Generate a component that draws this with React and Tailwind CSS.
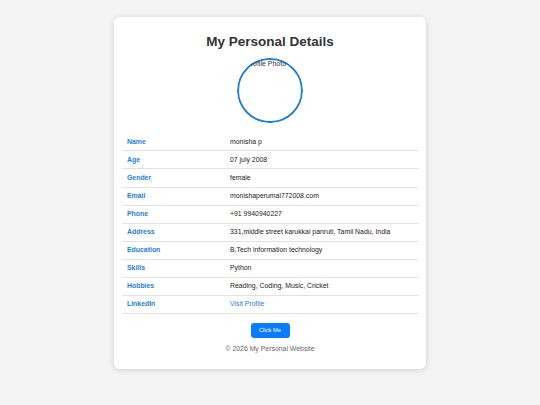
import React from "react";

const rows = [
  ["Name", "monisha p"],
  ["Age", "07 july 2008"],
  ["Gender", "female"],
  ["Email", "monishaperumal772008.com"],
  ["Phone", "+91 9940940227"],
  ["Address", "331,middle street karukkai panruti, Tamil Nadu, India"],
  ["Education", "B.Tech information technology"],
  ["Skills", "Python"],
  ["Hobbies", "Reading, Coding, Music, Cricket"],
];

export default function App() {
  return (
    <div className="min-h-screen bg-[#f4f4f4] pt-[17px] flex justify-center font-['Liberation_Sans',Arial,sans-serif]">
      <div className="w-[312px] h-[352px] bg-white rounded-[6px] shadow-[0_1px_6px_rgba(0,0,0,0.15)] px-[8px] pt-[17px] pb-[15px] flex flex-col items-center">
        <h1 className="text-[13.5px] leading-[16px] font-bold text-[#333]">My Personal Details</h1>
        <div className="relative mt-[8px] w-[66px] h-[66px] rounded-full overflow-hidden">
          <div className="absolute inset-0 rounded-full border-2 border-[#1c7ed6]" />
          <div className="absolute top-[1px] left-[9px] text-[7px] leading-[9px] text-[#333] whitespace-nowrap">Profile Photo</div>
        </div>
        <div className="mt-[10px] w-full">
          {rows.map(([k, v]) => (
            <div key={k} className="flex h-[18.1px] items-center border-b border-[#e2e2e2] text-[6.9px]">
              <div className="w-[108px] pl-[5px] font-bold text-[#1c7ed6]">{k}</div>
              <div className="text-[#222]">{v}</div>
            </div>
          ))}
          <div className="flex h-[18.1px] items-center border-b border-[#e2e2e2] text-[6.9px]">
            <div className="w-[108px] pl-[5px] font-bold text-[#1c7ed6]">LinkedIn</div>
            <a href="#" className="text-[#1c7ed6]">Visit Profile</a>
          </div>
        </div>
        <button className="mt-[9px] w-[39px] h-[15px] rounded-[3px] bg-[#0a7cff] text-white text-[5.8px] leading-none">Click Me</button>
        <p className="mt-[6px] text-[6.9px] leading-[10px] text-[#666]">© 2026 My Personal Website</p>
      </div>
    </div>
  );
}
